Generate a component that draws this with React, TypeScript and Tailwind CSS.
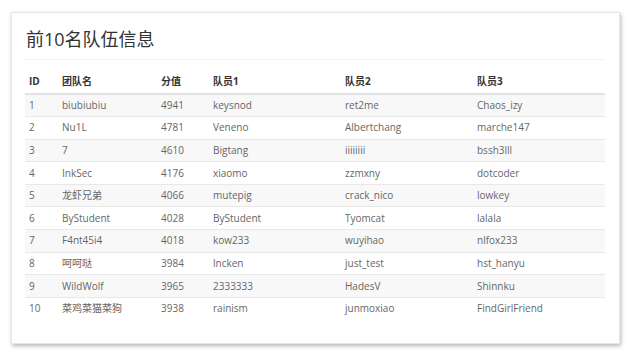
const TEAMS = [
  { id: 1, name: 'biubiubiu', score: 4941, m1: 'keysnod', m2: 'ret2me', m3: 'Chaos_izy' },
  { id: 2, name: 'Nu1L', score: 4781, m1: 'Veneno', m2: 'Albertchang', m3: 'marche147' },
  { id: 3, name: '7', score: 4610, m1: 'Bigtang', m2: 'iiiiiiii', m3: 'bssh3lll' },
  { id: 4, name: 'InkSec', score: 4176, m1: 'xiaomo', m2: 'zzmxny', m3: 'dotcoder' },
  { id: 5, name: '龙虾兄弟', score: 4066, m1: 'mutepig', m2: 'crack_nico', m3: 'lowkey' },
  { id: 6, name: 'ByStudent', score: 4028, m1: 'ByStudent', m2: 'Tyomcat', m3: 'lalala' },
  { id: 7, name: 'F4nt45i4', score: 4018, m1: 'kow233', m2: 'wuyihao', m3: 'nlfox233' },
  { id: 8, name: '呵呵哒', score: 3984, m1: 'lncken', m2: 'just_test', m3: 'hst_hanyu' },
  { id: 9, name: 'WildWolf', score: 3965, m1: '2333333', m2: 'HadesV', m3: 'Shinnku' },
  { id: 10, name: '菜鸡菜猫菜狗', score: 3938, m1: 'rainism', m2: 'junmoxiao', m3: 'FindGirlFriend' },
];

const HEADERS = ['ID', '团队名', '分值', '队员1', '队员2', '队员3'];

export default function App() {
  return (
    <div
      className="w-[640px] h-[353px] bg-white pt-[12px] pl-[11px]"
      style={{ fontFamily: '"Open Sans", "Noto Sans CJK SC", sans-serif' }}
    >
      <div className="w-[609px] h-[332px] bg-white border border-[#e6e6e6] shadow-[1px_2px_4px_rgba(0,0,0,0.28)] pt-[14px] pl-[13px] pr-[14px]">
        <h1 className="text-[18px] leading-[24px] text-[#333] font-normal pb-[8px] border-b border-[#f3f3f3] pl-px">
          前10名队伍信息
        </h1>
        <table className="mt-[11px] w-[580px] table-fixed border-collapse text-[10px] text-[#666]">
          <colgroup>
            <col className="w-[33px]" />
            <col className="w-[99px]" />
            <col className="w-[52px]" />
            <col className="w-[132px]" />
            <col className="w-[132px]" />
            <col className="w-[132px]" />
          </colgroup>
          <thead>
            <tr className="h-[23px] border-b-2 border-[#e2e2e2]">
              {HEADERS.map((h) => (
                <th key={h} className="text-left font-bold text-[#333] px-[4px] pb-[2px]">
                  {h}
                </th>
              ))}
            </tr>
          </thead>
          <tbody>
            {TEAMS.map((t, i) => (
              <tr
                key={t.id}
                className={`h-[22.6px] border-b border-[#e8e8e8] last:border-b-0 ${i % 2 === 0 ? 'bg-[#f8f8f9]' : 'bg-white'}`}
              >
                <td className="px-[4px]">{t.id}</td>
                <td className="px-[4px]">{t.name}</td>
                <td className="px-[4px]">{t.score}</td>
                <td className="px-[4px]">{t.m1}</td>
                <td className="px-[4px]">{t.m2}</td>
                <td className="px-[4px]">{t.m3}</td>
              </tr>
            ))}
          </tbody>
        </table>
      </div>
    </div>
  );
}
